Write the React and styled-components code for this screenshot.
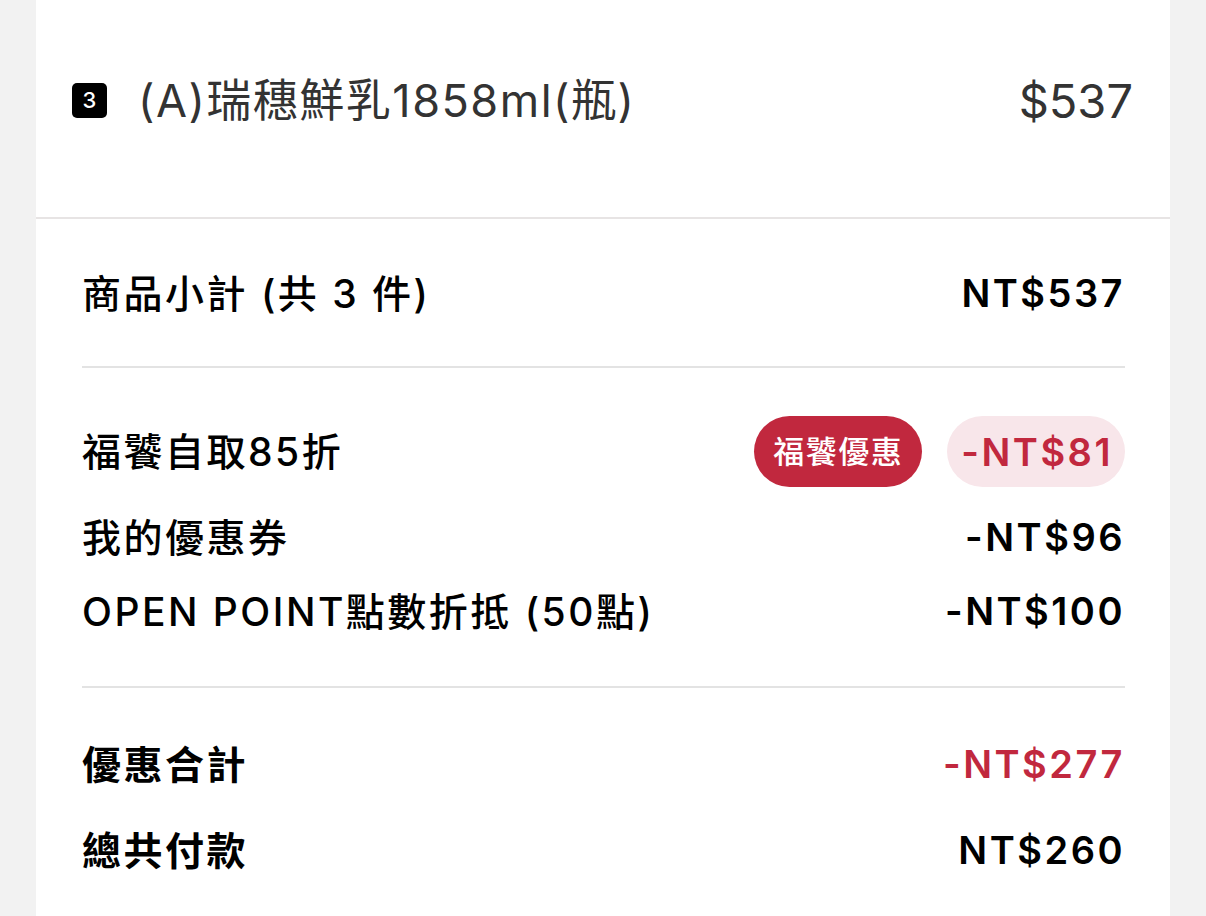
import styled, { createGlobalStyle } from "styled-components";

const GlobalStyle = createGlobalStyle`
  html, body {
    margin: 0;
    padding: 0;
    background: #f2f2f2;
  }
  body {
    font-family: Inter, "Noto Sans CJK TC", sans-serif;
  }
`;

const Page = styled.div`
  padding: 0 36px;
  height: 916px;
  overflow: hidden;
`;

const Card = styled.div`
  background: #fff;
  height: 100%;
`;

const ItemSection = styled.div`
  padding: 0 37px 17px 36px;
  border-bottom: 2px solid #e7e4e4;
`;

const ItemRow = styled.div`
  height: 200px;
  display: flex;
  align-items: center;
  line-height: 1;
`;

const Qty = styled.span`
  width: 35px;
  height: 35px;
  border-radius: 5px;
  background: #000;
  color: #fff;
  font-size: 22px;
  font-weight: 500;
  display: flex;
  align-items: center;
  justify-content: center;
  margin-right: 31px;
`;

const ItemName = styled.span`
  flex: 1;
  font-size: 45px;
  letter-spacing: 1.5px;
  color: #333;
`;

const ItemPrice = styled.span`
  font-size: 47px;
  color: #333;
`;

const Summary = styled.div`
  padding: 0 45px 0 46px;
`;

const Group = styled.div`
  display: flex;
  flex-direction: column;
  gap: ${(p) => p.$gap || 0}px;
  padding: ${(p) => p.$pad};
  border-bottom: ${(p) => (p.$last ? "none" : "2px solid #e3e3e3")};
`;

const Row = styled.div`
  display: flex;
  align-items: center;
  justify-content: space-between;
  height: ${(p) => p.$h || 48}px;
  line-height: 1;
`;

const Label = styled.span`
  font-size: 39px;
  font-weight: ${(p) => (p.$strong ? 700 : 500)};
  letter-spacing: 2.5px;
  color: #000;
`;

const Amount = styled.span`
  font-size: 38px;
  font-weight: 600;
  letter-spacing: 2.5px;
  color: ${(p) => (p.$red ? "#c1283e" : "#000")};
`;

const Tags = styled.div`
  display: flex;
  align-items: center;
  gap: 25px;
`;

const Badge = styled.span`
  height: 71px;
  padding: 0 19px;
  border-radius: 36px;
  background: #c1283e;
  color: #fff;
  font-size: 31px;
  font-weight: 500;
  letter-spacing: 1.5px;
  display: flex;
  align-items: center;
`;

const Pill = styled.span`
  height: 71px;
  padding: 0 12px 0 14px;
  border-radius: 36px;
  background: #f8e6ea;
  display: flex;
  align-items: center;
`;

export default function App() {
  return (
    <Page>
      <GlobalStyle />
      <Card>
        <ItemSection>
          <ItemRow>
            <Qty>3</Qty>
            <ItemName>(A)瑞穗鮮乳1858ml(瓶)</ItemName>
            <ItemPrice>$537</ItemPrice>
          </ItemRow>
        </ItemSection>
        <Summary>
          <Group $pad="50px 0 49px">
            <Row>
              <Label>商品小計 (共 3 件)</Label>
              <Amount>NT$537</Amount>
            </Row>
          </Group>
          <Group $pad="48px 0 51px" $gap={26}>
            <Row $h={71}>
              <Label>福饕自取85折</Label>
              <Tags>
                <Badge>福饕優惠</Badge>
                <Pill>
                  <Amount $red>-NT$81</Amount>
                </Pill>
              </Tags>
            </Row>
            <Row>
              <Label>我的優惠券</Label>
              <Amount>-NT$96</Amount>
            </Row>
            <Row>
              <Label>OPEN POINT點數折抵 (50點)</Label>
              <Amount>-NT$100</Amount>
            </Row>
          </Group>
          <Group $pad="52px 0 0" $gap={38} $last>
            <Row>
              <Label $strong>優惠合計</Label>
              <Amount $red>-NT$277</Amount>
            </Row>
            <Row>
              <Label $strong>總共付款</Label>
              <Amount>NT$260</Amount>
            </Row>
          </Group>
        </Summary>
      </Card>
    </Page>
  );
}
